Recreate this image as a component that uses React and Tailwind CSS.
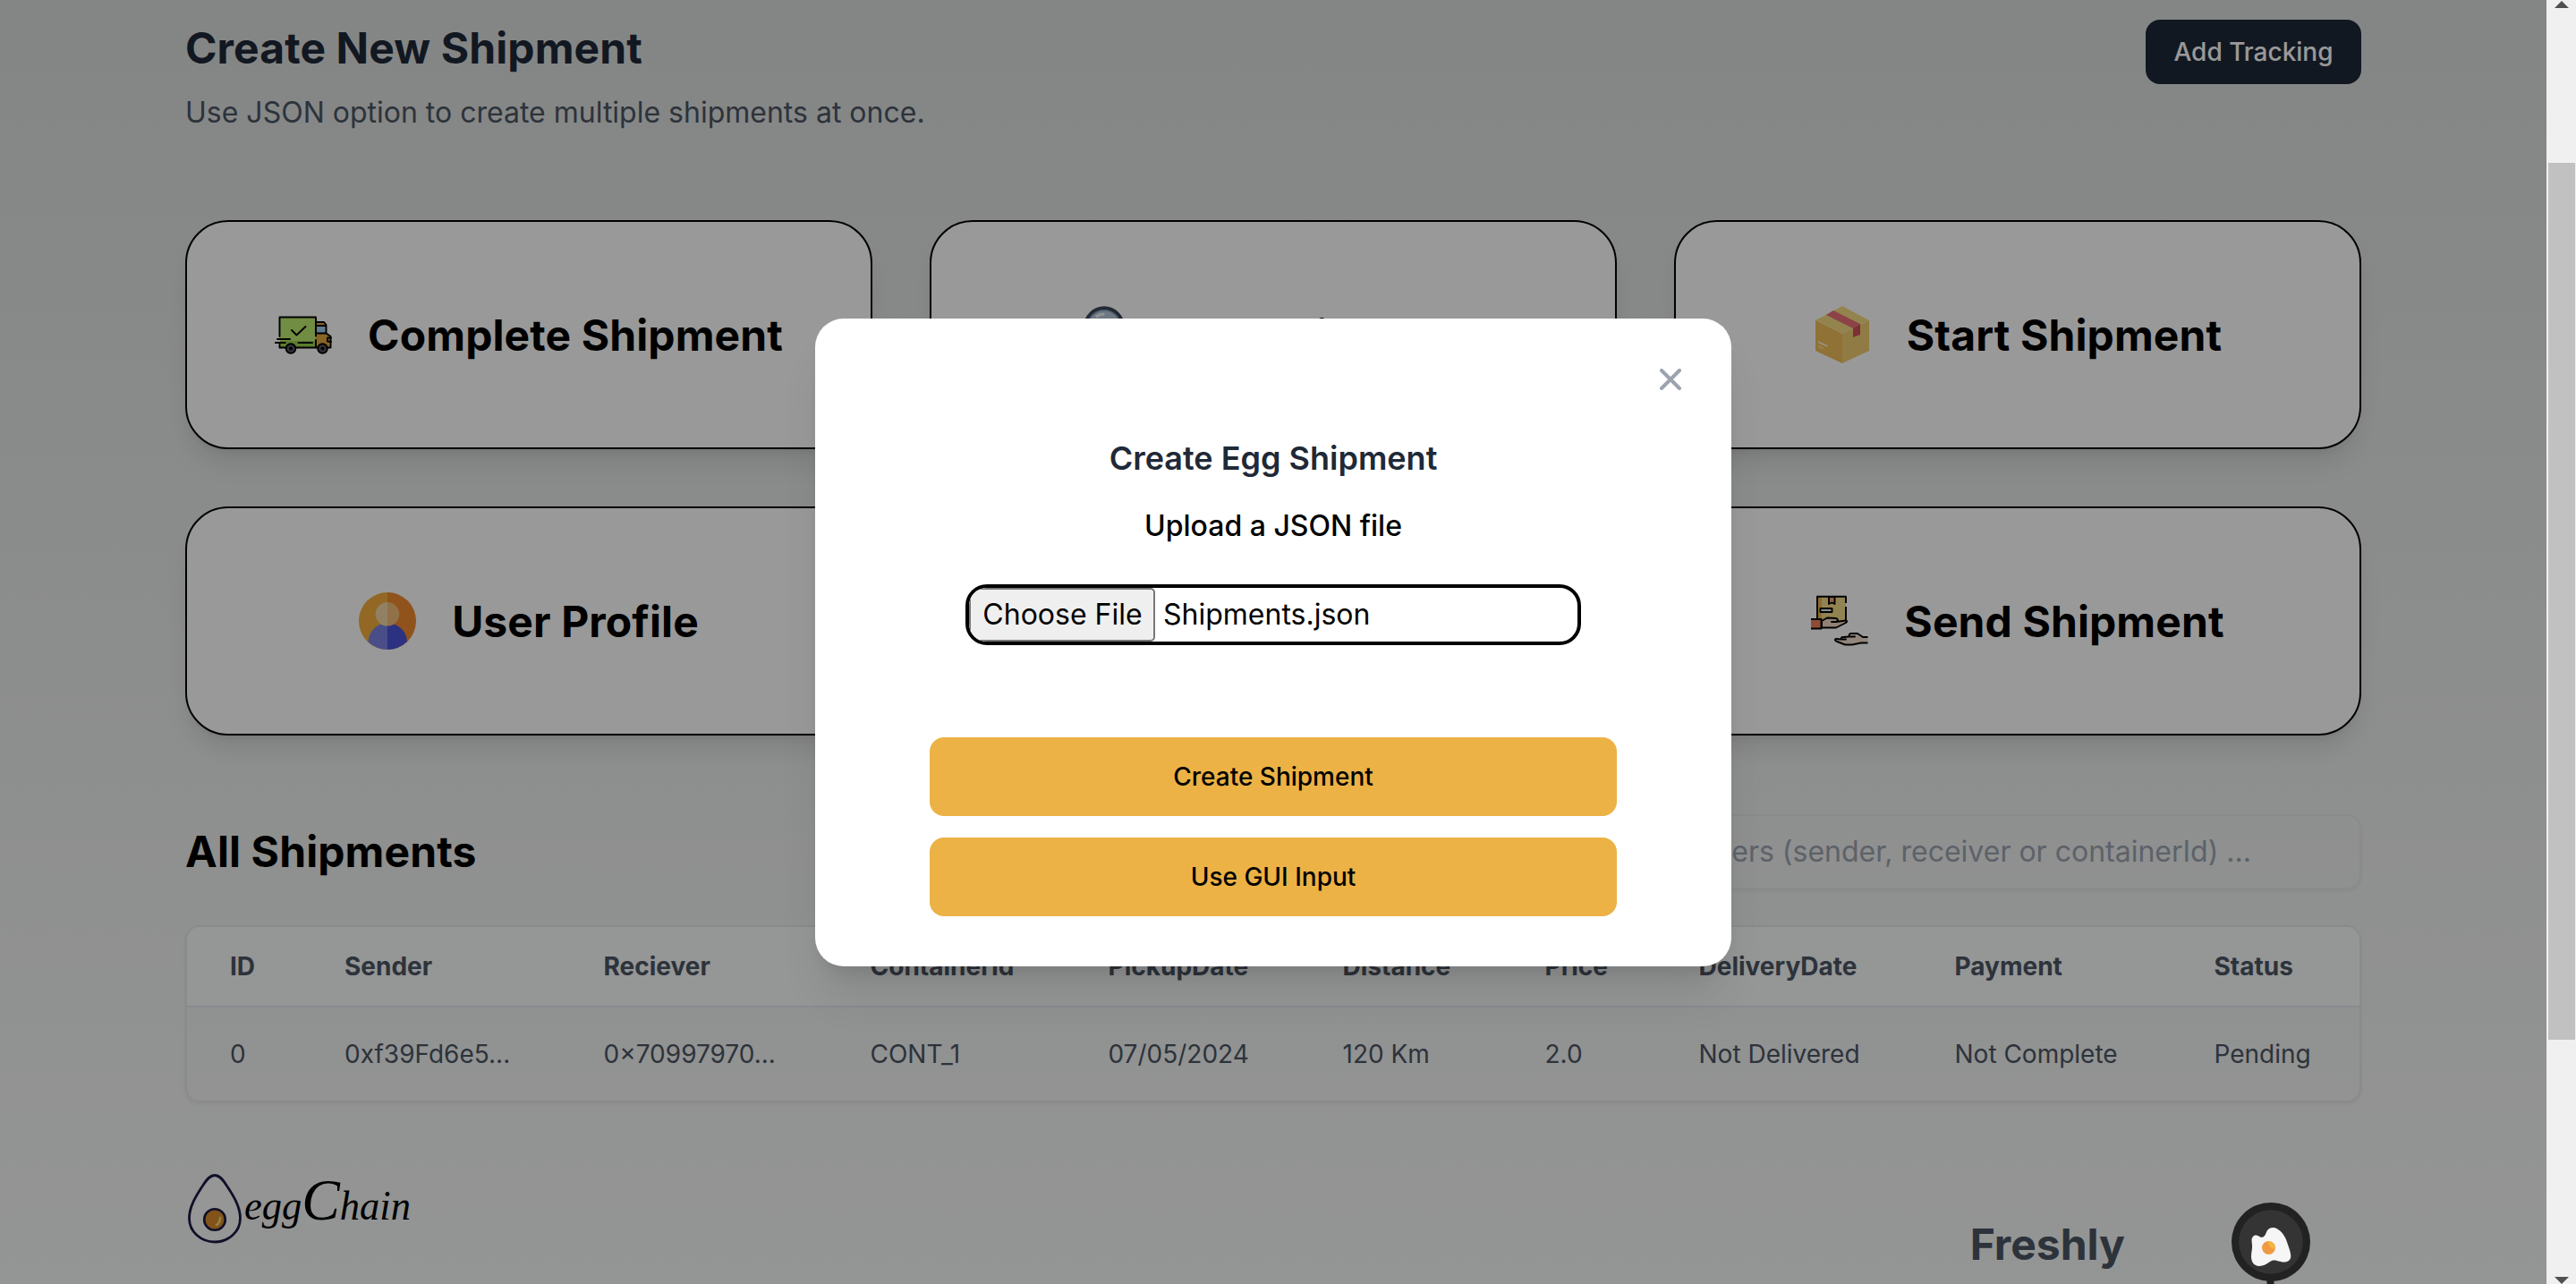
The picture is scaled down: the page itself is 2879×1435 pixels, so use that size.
import React from 'react';

function TruckIcon() {
  return (
    <svg viewBox="0 0 64 64" className="size-16 shrink-0" fill="none" stroke="#000" strokeWidth="1.9" strokeLinejoin="round" strokeLinecap="round">
      <path d="M6 13h40v33H6z" fill="#bcea71" stroke="none" />
      <path d="M6 39h40v7H6z" fill="#9bd04c" stroke="none" />
      <path d="M46 18h10l2 3v9l5 4v12H46z" fill="#e2a93d" stroke="none" />
      <path d="M47 22h10v8H47z" fill="#a0cff0" stroke="none" />
      <path d="M5.500 34V12.500h40.500v21M5.500 43v3.500h7M46 38v8.500H24M46 18h9l2.500 3v9.500H46M47 22h10M57.500 30.500l5 3.500v12.500h-3M46 46.500h2" />
      <path d="M19 27l5.500 5.500L34.500 23" />
      <path d="M3 37h14M0.900 41h11M26.500 41H42M63 35.500h-4v4l4 .5" />
      <circle cx="18" cy="47.500" r="5.300" fill="#55555f" />
      <circle cx="53.500" cy="47.500" r="5.300" fill="#55555f" />
      <circle cx="18" cy="47.500" r="1.100" fill="#000" />
      <circle cx="53.500" cy="47.500" r="1.100" fill="#000" />
    </svg>
  );
}

function SearchIcon() {
  return (
    <svg viewBox="0 0 64 64" className="size-16 shrink-0" fill="none">
      <path d="M38 40l22 20" stroke="#3c4858" strokeWidth="8" strokeLinecap="round" />
      <circle cx="23" cy="23" r="20.800" fill="#b4cadd" stroke="#3a475a" strokeWidth="4" />
      <circle cx="23" cy="23" r="18.300" stroke="#7f93aa" strokeWidth="1.400" />
      <path d="M15 11.500c2-1.500 4-2 7-2.200" stroke="#f2f2f2" strokeWidth="3" strokeLinecap="round" />
    </svg>
  );
}

function BoxIcon() {
  return (
    <svg viewBox="0 0 64 64" className="size-16 shrink-0">
      <path d="M2 16L32 31V64L2 50z" fill="#f0be5a" />
      <path d="M62 16L32 31V64L62 50z" fill="#eecd71" />
      <path d="M32 0L62 16 32 31 2 16z" fill="#f6dc82" />
      <path d="M22 5L52 20 44 25 14 10z" fill="#e87077" />
      <path d="M44 25l8-5v12l-8 3z" fill="#d04f5c" />
      <path d="M5 39l10.500 5v2L5 41z" fill="#fff2d6" />
      <path d="M5 44l6 2.500v2.200L5 46z" fill="#f7dc83" />
    </svg>
  );
}

function UserIcon() {
  return (
    <svg viewBox="0 0 64 64" className="size-16 shrink-0">
      <path d="M32 0a32 32 0 000 64z" fill="#f3ae3d" />
      <path d="M32 0a32 32 0 010 64z" fill="#f18a30" />
      <path d="M32 34C19 35 11 44 10.500 55.500A32 32 0 0032 64z" fill="#7a83e4" />
      <path d="M32 34c13 1 21.500 10 22 21A32 32 0 0132 64z" fill="#4a52d8" />
      <path d="M32 11a13.300 13.300 0 000 26.600z" fill="#f3d6a8" />
      <path d="M32 11a13.300 13.300 0 010 26.600z" fill="#f0bd78" />
    </svg>
  );
}

function SendIcon() {
  return (
    <svg viewBox="0 0 64 64" className="size-16 shrink-0" stroke="#000" strokeWidth="1.900" strokeLinejoin="round">
      <path d="M7 5h32v30H7z" fill="#f3dd87" stroke="none" />
      <path d="M7 5h5v26H7z" fill="#e8b450" stroke="none" />
      <path d="M7 29V4.800h32V12M39 16v18" fill="none" />
      <path d="M20 5h6.500v8l-3.200-1.500L20 13z" fill="#e9a577" />
      <path d="M10.500 18h13v4h-13z" fill="#e6f4f2" />
      <path d="M0 30h11.500v10.500H0z" fill="#ee7d5c" stroke="none" />
      <path d="M0 30h11.500v10.500H0" fill="none" />
      <path d="M12 31l6-3.500 10 .5c2.500.5 2.500 3 0 4h-5 5l11-1.500c2 .5 1 2-1 3l-10 5H12z" transform="translate(0 1)" fill="#f4d9c4" />
      <path d="M63.500 50H58l-6-4H44c-2 1-2 3 0 3.500h5-7l-5 .5c-3-.5-4 1-2 2.500h4-5l-6-.5c-2 .5-1 2 0 2.500l10 4h8l10-2h7.500" fill="#f4e0d0" />
    </svg>
  );
}

function CloseIcon() {
  return (
    <svg viewBox="0 0 24 24" className="size-6" stroke="#9ca3af" strokeWidth="4" strokeLinecap="round">
      <path d="M2 2l20 20M22 2L2 22" />
    </svg>
  );
}

function EggLogo() {
  return (
    <svg viewBox="0 0 60 78" className="h-[78px] w-[60px] shrink-0" strokeLinecap="round">
      <path d="M30 1.500c5 0 8.500 4 13 11C50 23 58.500 36 58.500 49.500 58.500 65 45 76 30 76S1.500 65 1.500 49.500C1.500 36 10 23 17 12.500c4.500-7 8-11 13-11z" fill="#fff" fillOpacity=".35" stroke="#1c1a45" strokeWidth="2.800" />
      <circle cx="30" cy="51" r="11.800" fill="#d98a2c" stroke="#1c1a45" strokeWidth="2.600" />
      <path d="M36 49c0 4-1.500 6.500-4 8" stroke="#f6d878" strokeWidth="2.600" fill="none" />
    </svg>
  );
}

function PanIcon() {
  return (
    <svg viewBox="0 0 88 91" className="h-[91px] w-[88px]">
      <path d="M39.500 86h8v5h-8z" fill="#222" />
      <circle cx="44" cy="44" r="44" fill="#222" />
      <circle cx="44" cy="44" r="35.800" fill="#343434" />
      <path d="M39 33c2-5 8-6.500 13-3 6 4 9 10 11 17 2 6 4 11 3 15-2 5-7 5-11 4-5-1-7-2-10-1-4 2-8 6-14 6-6-.5-8.500-4-9-10 0-6 1.500-9 1-14-.5-4-1-7 1-9 3-3 6-1 8 .5 3 1 5 0 7-5.500z" fill="#f6f6f6" />
      <circle cx="41.500" cy="50.500" r="7.500" fill="#ef9a41" />
      <path d="M41 43.200c5-.5 8.500 4 7 9-4-1-7-4-7-9z" fill="#f3b643" />
    </svg>
  );
}

const cards = [
  { label: 'Complete Shipment', Icon: TruckIcon },
  { label: 'Get Shipment', Icon: SearchIcon },
  { label: 'Start Shipment', Icon: BoxIcon },
  { label: 'User Profile', Icon: UserIcon },
  null,
  { label: 'Send Shipment', Icon: SendIcon },
];

const headers = ['ID', 'Sender', 'Reciever', 'ContainerId', 'PickupDate', 'Distance', 'Price', 'DeliveryDate', 'Payment', 'Status'];
const row = ['0', '0xf39Fd6e5...', '0×70997970...', 'CONT_1', '07/05/2024', '120 Km', '2.0', 'Not Delivered', 'Not Complete', 'Pending'];
const columns = 'grid grid-cols-[128px_289.500px_298px_266px_262px_226px_172px_286px_290px_1fr] text-[28px] leading-10 text-[#4b5563]';

function Card({ card }) {
  return (
    <div className="flex h-64 items-center justify-center gap-10 rounded-[48px] border-2 border-black bg-white shadow-[0_20px_30px_-6px_rgba(0,0,0,0.1),0_8px_12px_-8px_rgba(0,0,0,0.1)]">
      {card && (
        <>
          <card.Icon />
          <span className="pt-px text-[48px] leading-none font-bold tracking-[0.1px] whitespace-nowrap text-black">{card.label}</span>
        </>
      )}
    </div>
  );
}

function Dialog() {
  return (
    <div className="flex h-[724px] w-[1024px] flex-col rounded-[32px] bg-white shadow-[0_40px_50px_-10px_rgba(0,0,0,0.1),0_16px_20px_-12px_rgba(0,0,0,0.1)]">
      <div className="flex justify-end pt-14 pr-14">
        <CloseIcon />
      </div>
      <h2 className="mt-[48px] text-center text-[36px] leading-[56px] font-semibold text-[#1f2937]">Create Egg Shipment</h2>
      <p className="mt-6 text-center text-[32px] leading-[48px] font-medium text-black">Upload a JSON file</p>
      <div className="mx-auto mt-[41px] flex h-[68px] w-[688px] items-center overflow-hidden rounded-[24px] border-4 border-black bg-white text-[32px] text-black">
        <button className="h-[60px] w-[208px] rounded-[5px] border-2 border-[#767676] bg-[#efefef] pl-px leading-none whitespace-nowrap">Choose File</button>
        <span className="ml-[9px] leading-none">Shipments.json</span>
      </div>
      <div className="mx-32 mt-[103px] flex flex-col gap-6 text-[28px] font-medium text-black">
        <button className="h-[88px] rounded-2xl bg-[#ecb245]">Create Shipment</button>
        <button className="h-[88px] rounded-2xl bg-[#ecb245]">Use GUI Input</button>
      </div>
    </div>
  );
}

function Scrollbar() {
  return (
    <div className="flex w-[33px] shrink-0 flex-col items-center bg-[#f0f0f0]">
      <svg viewBox="0 0 16 9" className="h-[9px] w-4 shrink-0" fill="#505050"><path d="M8 1l8 8H0z" /></svg>
      <div className="mt-[173px] h-[980px] w-[30px] shrink-0 bg-[#c1c1c1]" />
      <svg viewBox="0 0 16 8" className="mt-auto h-2 w-4 shrink-0" fill="#505050"><path d="M0 0h16L8 8z" /></svg>
    </div>
  );
}

export default function App() {
  return (
    <div className="flex h-[1435px] w-full overflow-hidden font-['Inter',sans-serif]">
      <main className="relative flex-1 overflow-hidden bg-linear-to-b from-[#dcdfde] to-[#f7f9f8]">
        <div className="mx-auto w-[2432px] pt-[22px]">
          <header className="flex items-start justify-between">
            <div>
              <h1 className="text-[48px] leading-[64px] font-bold tracking-[0.1px] text-[#1f2937]">Create New Shipment</h1>
              <p className="mt-4 text-[32px] leading-[48px] text-[#4b5563]">Use JSON option to create multiple shipments at once.</p>
            </div>
            <button className="h-[72px] w-[241px] rounded-2xl bg-[#1f2937] text-[28px] font-medium whitespace-nowrap text-white">Add Tracking</button>
          </header>

          <section className="mt-24 grid grid-cols-3 gap-16">
            {cards.map((card, i) => <Card key={i} card={card} />)}
          </section>

          <div className="mt-[88px] flex items-center justify-between">
            <h2 className="text-[48px] leading-none font-bold tracking-[0.1px] text-black">All Shipments</h2>
            <div className="flex h-[84px] w-[1000px] items-center justify-end rounded-2xl border-2 border-[#e5e7eb] pr-[121px] text-[32px] text-[#9ca3af] shadow-[0_2px_4px_rgba(0,0,0,0.05)]">
              containers (sender, receiver or containerId) ...
            </div>
          </div>

          <div className="mt-10 overflow-hidden rounded-2xl border-2 border-[#e5e7eb] shadow-[0_2px_4px_rgba(0,0,0,0.06)]">
            <div className={columns + ' border-b-2 border-[#e5e7eb] bg-[#f9fafb] pt-6 pb-6 font-bold'}>
              {headers.map((h) => <span key={h} className="pl-[48px] whitespace-nowrap">{h}</span>)}
            </div>
            <div className={columns + ' py-8'}>
              {row.map((v) => <span key={v} className="pl-[48px] whitespace-nowrap">{v}</span>)}
            </div>
          </div>

          <footer className="mt-[80px] flex items-start justify-between">
            <div className="flex pl-[3px]">
              <EggLogo />
              <svg viewBox="0 0 192 78" className="h-[78px] w-[192px] overflow-visible" fontStyle="italic" fontFamily="'Liberation Serif', serif">
                <text x="3" y="51" fontSize="46" fill="#000" textLength="186" lengthAdjust="spacingAndGlyphs">
                  egg<tspan fontSize="66">C</tspan>hain
                </text>
              </svg>
            </div>
            <span className="mt-[55px] mr-[264px] text-[48px] leading-none font-bold text-[#4b5563]">Freshly</span>
          </footer>
        </div>

        <div className="absolute inset-0 flex items-center justify-center bg-black/40 pb-px pt-0.5">
          <Dialog />
        </div>
        <div className="absolute right-[264px] bottom-0">
          <PanIcon />
        </div>
      </main>
      <Scrollbar />
    </div>
  );
}
